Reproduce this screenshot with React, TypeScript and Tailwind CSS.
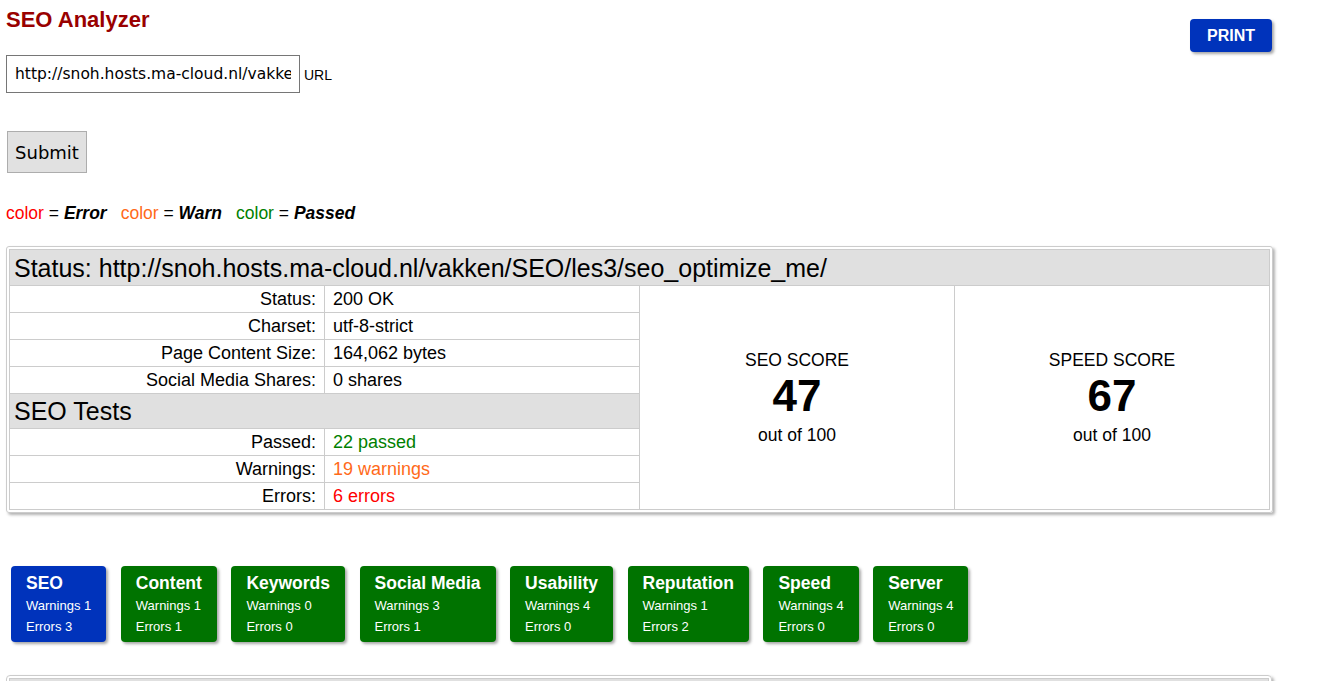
import React from 'react';

const tabs = [
  { name: 'SEO', warnings: 1, errors: 3, active: true },
  { name: 'Content', warnings: 1, errors: 1 },
  { name: 'Keywords', warnings: 0, errors: 0 },
  { name: 'Social Media', warnings: 3, errors: 1 },
  { name: 'Usability', warnings: 4, errors: 0 },
  { name: 'Reputation', warnings: 1, errors: 2 },
  { name: 'Speed', warnings: 4, errors: 0 },
  { name: 'Server', warnings: 4, errors: 0 },
];

const infoRows = [
  { label: 'Status:', value: '200 OK' },
  { label: 'Charset:', value: 'utf-8-strict' },
  { label: 'Page Content Size:', value: '164,062 bytes' },
  { label: 'Social Media Shares:', value: '0 shares' },
];

const testRows = [
  { label: 'Passed:', value: '22 passed', color: 'text-[#008000]' },
  { label: 'Warnings:', value: '19 warnings', color: 'text-[#ff6a1a]' },
  { label: 'Errors:', value: '6 errors', color: 'text-[#ff0000]' },
];

function ScoreCell({ title, score }: { title: string; score: number }) {
  return (
    <td rowSpan={9} className="border border-[#cccccc] text-center align-middle">
      <div className="text-[17.5px] leading-[18px]">{title}</div>
      <div className="text-[44px] leading-[54px] font-bold">{score}</div>
      <div className="mt-[3px] text-[17.5px] leading-[18px]">out of 100</div>
    </td>
  );
}

export default function App() {
  return (
    <div className="w-[1320px] pl-[6px] text-black" style={{ fontFamily: '"Liberation Sans", Arial, sans-serif' }}>
      <div className="flex h-[33px] w-[1267px] items-start justify-between">
        <h1 className="mt-[7px] text-[22px] leading-[26px] font-bold text-[#990000]">SEO Analyzer</h1>
        <button className="mt-[19px] mr-[1px] h-[33px] w-[82px] shrink-0 rounded-[4px] bg-[#0033bb] text-[16px] font-bold text-white shadow-[2px_2px_3px_rgba(0,0,0,0.35)]">
          PRINT
        </button>
      </div>

      <div className="mt-[22px] flex items-center" style={{ fontFamily: '"DejaVu Sans", Verdana, sans-serif' }}>
        <input
          readOnly
          value="http://snoh.hosts.ma-cloud.nl/vakken/SEO/les3/seo_optimize_me/"
          className="h-[38px] w-[294px] border border-[#767676] bg-white px-[8px] text-[15.5px] outline-none"
        />
        <span
          className="ml-[4px] pt-[2px] text-[14px]"
          style={{ fontFamily: '"Liberation Sans", Arial, sans-serif' }}
        >
          URL
        </span>
      </div>

      <button
        className="mt-[38px] ml-[1px] h-[42px] w-[80px] border border-[#adadad] bg-[#e1e1e1] text-[18px]"
        style={{ fontFamily: '"DejaVu Sans", Verdana, sans-serif' }}
      >
        Submit
      </button>

      <div className="mt-[30px] text-[17.5px] leading-[20px]">
        <span className="text-[#ff0000]">color</span> = <b><i>Error</i></b>
        <span className="ml-[14px] text-[#ff6a1a]">color</span> = <b><i>Warn</i></b>
        <span className="ml-[14px] text-[#008000]">color</span> = <b><i>Passed</i></b>
      </div>

      <div className="mt-[23px] w-[1267px] rounded-[3px] border border-[#cccccc] p-[2px] shadow-[2px_2px_3px_rgba(0,0,0,0.3)]">
        <table className="w-full table-fixed border-collapse text-[18px]">
          <colgroup>
            <col className="w-1/4" />
            <col className="w-1/4" />
            <col className="w-1/4" />
            <col className="w-1/4" />
          </colgroup>
          <tbody>
            <tr>
              <td colSpan={4} className="h-[36px] border border-[#cccccc] bg-[#e0e0e0] px-[4px] text-[25px] leading-[34px]">
                Status: http://snoh.hosts.ma-cloud.nl/vakken/SEO/les3/seo_optimize_me/
              </td>
            </tr>
            {infoRows.map((row, i) => (
              <tr key={row.label} className="h-[27px]">
                <td className="border border-[#cccccc] pr-[8px] text-right leading-[24px]">{row.label}</td>
                <td className="border border-[#cccccc] pl-[8px] leading-[24px]">{row.value}</td>
                {i === 0 && (
                  <>
                    <ScoreCell title="SEO SCORE" score={47} />
                    <ScoreCell title="SPEED SCORE" score={67} />
                  </>
                )}
              </tr>
            ))}
            <tr className="h-[35px]">
              <td colSpan={2} className="border border-[#cccccc] bg-[#e0e0e0] px-[4px] text-[25px] leading-[33px]">
                SEO Tests
              </td>
            </tr>
            {testRows.map((row) => (
              <tr key={row.label} className="h-[27px]">
                <td className="border border-[#cccccc] pr-[8px] text-right leading-[24px]">{row.label}</td>
                <td className={`border border-[#cccccc] pl-[8px] leading-[24px] ${row.color}`}>{row.value}</td>
              </tr>
            ))}
          </tbody>
        </table>
      </div>

      <div className="mt-[53px] ml-[5px] flex gap-[14.5px]">
        {tabs.map((t) => (
          <div
            key={t.name}
            className={`rounded-[4px] px-[15px] pt-[5px] pb-[5px] text-white shadow-[2px_2px_3px_rgba(0,0,0,0.35)] ${
              t.active ? 'bg-[#0033bb]' : 'bg-[#007300]'
            }`}
          >
            <div className="text-[17.5px] leading-[24px] font-bold">{t.name}</div>
            <div className="text-[13px] leading-[21px]">Warnings {t.warnings}</div>
            <div className="text-[13px] leading-[21px]">Errors {t.errors}</div>
          </div>
        ))}
      </div>

      <div className="mt-[33px] h-[40px] w-[1266px] rounded-t-[4px] border border-[#cccccc] p-[2px] shadow-[2px_2px_3px_rgba(0,0,0,0.3)]">
        <div className="h-full border border-[#cccccc] bg-[#e0e0e0]" />
      </div>
    </div>
  );
}
